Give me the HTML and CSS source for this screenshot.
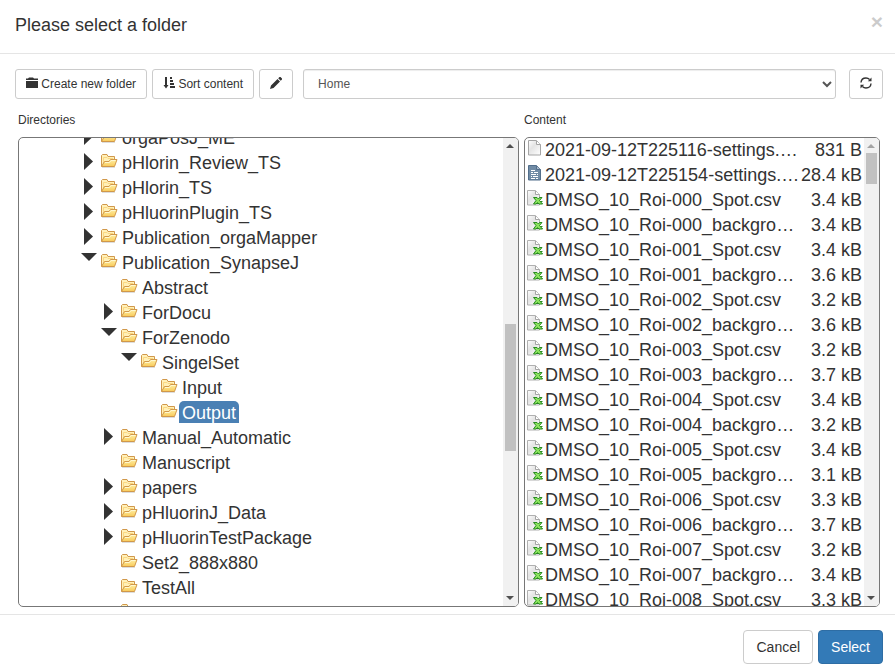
FILE: index.html
```html
<!DOCTYPE html>
<html lang="en">
<head>
<meta charset="utf-8">
<title>Please select a folder</title>
<link rel="stylesheet" href="styles.css">
</head>
<body>
<svg class="sprites" aria-hidden="true">
  <defs>
    <linearGradient id="gold" x1="0" y1="0" x2="0" y2="1"><stop offset="0" stop-color="#fff0a8"/><stop offset="1" stop-color="#f8ca58"/></linearGradient>
    <linearGradient id="paper" x1="0" y1="0" x2="1" y2="1"><stop offset="0" stop-color="#ffffff"/><stop offset="0.4" stop-color="#e4e4e4"/><stop offset="1" stop-color="#ffffff"/></linearGradient>
  </defs>
  <symbol id="folder" viewBox="0 0 17 16">
    <path d="M1 14.5h13" stroke="#ddd"/>
    <path d="M.5 13.5v-11l1-1H6l1 2h6.500v3" fill="#fff0b8" stroke="#d1984a"/>
    <path d="M2.500 11V4.500H6l1 1h5" fill="none" stroke="#fbd780"/>
    <path d="M.5 13.500l3-5H8l1.500-2h6.500l-2.500 7z" fill="url(#gold)" stroke="#d1984a"/>
    <path d="M4 9.500h4.500l1.500-2h4.500" fill="none" stroke="#fff8d0"/>
  </symbol>
  <symbol id="right" viewBox="0 0 20 25"><path d="M4 3v17l9-8.500z" fill="#333"/></symbol>
  <symbol id="down" viewBox="0 0 20 25"><path d="M1 3h16l-8 8z" fill="#333"/></symbol>
  <symbol id="blank" viewBox="0 0 16 16">
    <path d="M1.500.5h8l4 4v10.500h-12z" fill="url(#paper)" stroke="#a5a5a5"/>
    <path d="M9.500 1v3.500h4" fill="#fff" stroke="#a5a5a5"/>
  </symbol>
  <symbol id="text" viewBox="0 0 16 16">
    <path d="M1.500.5h8l4 4v10.500h-12z" fill="#708ba5" stroke="#526e8b"/>
    <path d="M9.500 1v3.500h4" fill="#a9bacb" stroke="#526e8b"/>
    <path d="M4 5.500h4M4 7.500h2m1 0h4M4 9.500h5m1 0h1M4 11.500h1m1 0h5M4 13.500h4m1 0h2" stroke="#fff"/>
  </symbol>
  <symbol id="sheet" viewBox="0 0 16 16">
    <path d="M.5.5h8l4 4v10.500H.5z" fill="url(#paper)" stroke="#b0b0b0"/>
    <path d="M8.500 1v3.500h4" fill="#fff" stroke="#a5a5a5"/>
    <path d="M10 13.500h5.500M12 11.500h3.500" stroke="#278a20"/>
    <path d="M6.500 7.500H10l1.500 1.500 1-1.500h2.500l-2.500 3 3 3.500H12l-1.500-1.500-1.500 1.500H6.500L9 10.500z" fill="#8be45c" stroke="#278a20"/>
  </symbol>
</svg>

<main class="dialog">
  <header class="header">
    <h1>Please select a folder</h1>
    <button class="close" type="button" aria-label="Close">×</button>
  </header>

  <div class="toolbar">
    <button class="btn small" type="button"><svg class="glyph" viewBox="0 0 12 12"><path d="M0 1.500h2l1-1h4l1 1h4v1.500H0zM0 4h12v7H0z"/></svg> Create new folder</button>
    <button class="btn small" type="button"><svg class="glyph" viewBox="0 0 12 12"><path d="M2 0h2v8h1.500L3 11.500.5 8H2zM7 0h2v2H7zM7 3h3v2H7zM7 6h4v2H7zM7 9h5v2H7z"/></svg> Sort content</button>
    <button class="btn small" type="button" aria-label="Rename"><svg class="glyph" viewBox="0 0 12 12"><path d="M0 12l1-3.500L7.500 2 10 4.500 3.500 11zM8.200 1.300L9.500 0h1L12 1.500v1l-1.300 1.300z"/></svg></button>
    <select class="places" aria-label="Location"><option>Home</option></select>
    <button class="btn small" type="button" aria-label="Refresh"><svg class="glyph" viewBox="0 0 12 12"><path d="M1 5.500C1.200 2.800 3.300 1 6 1c1.600 0 2.700.6 3.600 1.500M11 6.500C10.800 9.200 8.700 11 6 11c-1.600 0-2.700-.6-3.600-1.500" fill="none" stroke="#333" stroke-width="1.400"/><path d="M11.500.5v3.700H7.800zM.5 11.500V7.800h3.700z"/></svg></button>
  </div>

  <div class="panes">
    <section class="pane">
      <h2>Directories</h2>
      <div class="frame">
        <div class="view">
          <ul class="tree">
            <li><div class="node"><svg class="toggle"><use href="#right"/></svg><svg class="folder"><use href="#folder"/></svg><span>orgaPosJ_ME</span></div></li>
            <li><div class="node"><svg class="toggle"><use href="#right"/></svg><svg class="folder"><use href="#folder"/></svg><span>pHlorin_Review_TS</span></div></li>
            <li><div class="node"><svg class="toggle"><use href="#right"/></svg><svg class="folder"><use href="#folder"/></svg><span>pHlorin_TS</span></div></li>
            <li><div class="node"><svg class="toggle"><use href="#right"/></svg><svg class="folder"><use href="#folder"/></svg><span>pHluorinPlugin_TS</span></div></li>
            <li><div class="node"><svg class="toggle"><use href="#right"/></svg><svg class="folder"><use href="#folder"/></svg><span>Publication_orgaMapper</span></div></li>
            <li><div class="node"><svg class="toggle"><use href="#down"/></svg><svg class="folder"><use href="#folder"/></svg><span>Publication_SynapseJ</span></div>
              <ul>
                <li><div class="node"><svg class="toggle"></svg><svg class="folder"><use href="#folder"/></svg><span>Abstract</span></div></li>
                <li><div class="node"><svg class="toggle"><use href="#right"/></svg><svg class="folder"><use href="#folder"/></svg><span>ForDocu</span></div></li>
                <li><div class="node"><svg class="toggle"><use href="#down"/></svg><svg class="folder"><use href="#folder"/></svg><span>ForZenodo</span></div>
                  <ul>
                    <li><div class="node"><svg class="toggle"><use href="#down"/></svg><svg class="folder"><use href="#folder"/></svg><span>SingelSet</span></div>
                      <ul>
                        <li><div class="node"><svg class="toggle"></svg><svg class="folder"><use href="#folder"/></svg><span>Input</span></div></li>
                        <li><div class="node"><svg class="toggle"></svg><svg class="folder"><use href="#folder"/></svg><span class="selected">Output</span></div></li>
                      </ul>
                    </li>
                  </ul>
                </li>
                <li><div class="node"><svg class="toggle"><use href="#right"/></svg><svg class="folder"><use href="#folder"/></svg><span>Manual_Automatic</span></div></li>
                <li><div class="node"><svg class="toggle"></svg><svg class="folder"><use href="#folder"/></svg><span>Manuscript</span></div></li>
                <li><div class="node"><svg class="toggle"><use href="#right"/></svg><svg class="folder"><use href="#folder"/></svg><span>papers</span></div></li>
                <li><div class="node"><svg class="toggle"><use href="#right"/></svg><svg class="folder"><use href="#folder"/></svg><span>pHluorinJ_Data</span></div></li>
                <li><div class="node"><svg class="toggle"><use href="#right"/></svg><svg class="folder"><use href="#folder"/></svg><span>pHluorinTestPackage</span></div></li>
                <li><div class="node"><svg class="toggle"></svg><svg class="folder"><use href="#folder"/></svg><span>Set2_888x880</span></div></li>
                <li><div class="node"><svg class="toggle"></svg><svg class="folder"><use href="#folder"/></svg><span>TestAll</span></div></li>
                <li><div class="node"><svg class="toggle"></svg><svg class="folder"><use href="#folder"/></svg></div></li>
              </ul>
            </li>
          </ul>
        </div>
        <div class="bar">
          <svg class="arrow" viewBox="0 0 15 15"><path d="M3 10h8L7 6z"/></svg>
          <div class="track middle"><div class="thumb"></div></div>
          <svg class="arrow" viewBox="0 0 15 15"><path d="M3 5h8L7 9z"/></svg>
        </div>
      </div>
    </section>

    <section class="pane">
      <h2>Content</h2>
      <div class="frame">
        <div class="view">
          <table class="files">
            <colgroup><col class="kind"><col><col class="size"></colgroup>
            <tbody>
              <tr><td><svg class="file"><use href="#blank"/></svg></td><td>2021-09-12T225116-settings.json</td><td>831 B</td></tr>
              <tr><td><svg class="file"><use href="#text"/></svg></td><td>2021-09-12T225154-settings.json</td><td>28.4 kB</td></tr>
              <tr><td><svg class="file"><use href="#sheet"/></svg></td><td>DMSO_10_Roi-000_Spot.csv</td><td>3.4 kB</td></tr>
              <tr><td><svg class="file"><use href="#sheet"/></svg></td><td>DMSO_10_Roi-000_background.csv</td><td>3.4 kB</td></tr>
              <tr><td><svg class="file"><use href="#sheet"/></svg></td><td>DMSO_10_Roi-001_Spot.csv</td><td>3.4 kB</td></tr>
              <tr><td><svg class="file"><use href="#sheet"/></svg></td><td>DMSO_10_Roi-001_background.csv</td><td>3.6 kB</td></tr>
              <tr><td><svg class="file"><use href="#sheet"/></svg></td><td>DMSO_10_Roi-002_Spot.csv</td><td>3.2 kB</td></tr>
              <tr><td><svg class="file"><use href="#sheet"/></svg></td><td>DMSO_10_Roi-002_background.csv</td><td>3.6 kB</td></tr>
              <tr><td><svg class="file"><use href="#sheet"/></svg></td><td>DMSO_10_Roi-003_Spot.csv</td><td>3.2 kB</td></tr>
              <tr><td><svg class="file"><use href="#sheet"/></svg></td><td>DMSO_10_Roi-003_background.csv</td><td>3.7 kB</td></tr>
              <tr><td><svg class="file"><use href="#sheet"/></svg></td><td>DMSO_10_Roi-004_Spot.csv</td><td>3.4 kB</td></tr>
              <tr><td><svg class="file"><use href="#sheet"/></svg></td><td>DMSO_10_Roi-004_background.csv</td><td>3.2 kB</td></tr>
              <tr><td><svg class="file"><use href="#sheet"/></svg></td><td>DMSO_10_Roi-005_Spot.csv</td><td>3.4 kB</td></tr>
              <tr><td><svg class="file"><use href="#sheet"/></svg></td><td>DMSO_10_Roi-005_background.csv</td><td>3.1 kB</td></tr>
              <tr><td><svg class="file"><use href="#sheet"/></svg></td><td>DMSO_10_Roi-006_Spot.csv</td><td>3.3 kB</td></tr>
              <tr><td><svg class="file"><use href="#sheet"/></svg></td><td>DMSO_10_Roi-006_background.csv</td><td>3.7 kB</td></tr>
              <tr><td><svg class="file"><use href="#sheet"/></svg></td><td>DMSO_10_Roi-007_Spot.csv</td><td>3.2 kB</td></tr>
              <tr><td><svg class="file"><use href="#sheet"/></svg></td><td>DMSO_10_Roi-007_background.csv</td><td>3.4 kB</td></tr>
              <tr><td><svg class="file"><use href="#sheet"/></svg></td><td>DMSO_10_Roi-008_Spot.csv</td><td>3.3 kB</td></tr>
            </tbody>
          </table>
        </div>
        <div class="bar">
          <svg class="arrow dim" viewBox="0 0 15 15"><path d="M3 10h8L7 6z"/></svg>
          <div class="track top"><div class="thumb"></div></div>
          <svg class="arrow" viewBox="0 0 15 15"><path d="M3 5h8L7 9z"/></svg>
        </div>
      </div>
    </section>
  </div>

  <footer class="footer">
    <button class="btn" type="button">Cancel</button>
    <button class="btn primary" type="button">Select</button>
  </footer>
</main>
</body>
</html>
```
FILE: styles.css
```css
* { box-sizing: border-box; }

body {
  margin: 0;
  background: #fff;
  color: #333;
  font: 14px/20px "Liberation Sans", Arial, sans-serif;
}

.sprites { position: absolute; width: 0; height: 0; }

.dialog {
  display: flex;
  flex-direction: column;
  height: 100vh;
}

.header {
  display: flex;
  align-items: flex-start;
  justify-content: space-between;
  padding: 12px 12px 15px 15px;
  border-bottom: 1px solid #e5e5e5;
}

h1 {
  margin: 0;
  font-size: 18px;
  font-weight: 400;
  line-height: 26px;
}

.close {
  padding: 0;
  border: 0;
  background: none;
  color: #000;
  opacity: 0.2;
  font: bold 21px/20px "Liberation Sans", Arial, sans-serif;
}

.toolbar {
  display: flex;
  gap: 5px;
  padding: 15px 12px 0 15px;
}

.btn {
  padding: 6px 12px;
  border: 1px solid #ccc;
  border-radius: 4px;
  background: #fff;
  color: #333;
  font: inherit;
  white-space: nowrap;
}

.btn.small {
  height: 30px;
  padding: 5px 10px;
  border-radius: 3px;
  font-size: 12px;
  line-height: 18px;
}

.btn.primary {
  border-color: #2e6da4;
  background: #337ab7;
  color: #fff;
}

.glyph {
  width: 12px;
  height: 12px;
  vertical-align: -1px;
  fill: #333;
}

.places {
  flex: 1;
  min-width: 0;
  height: 30px;
  margin: 0 8px 0 5px;
  padding: 5px 0 5px 10px;
  border: 1px solid #ccc;
  border-radius: 3px;
  background: #fff;
  box-shadow: inset 0 1px 1px rgba(0, 0, 0, 0.075);
  color: #555;
  font: inherit;
  font-size: 12px;
}

.panes {
  display: grid;
  grid-template-columns: minmax(0, 38fr) minmax(0, 27fr);
  gap: 5px;
  flex: 1;
  min-height: 0;
  padding: 11px 15px 7px 18px;
}

.pane {
  display: flex;
  flex-direction: column;
  min-height: 0;
}

h2 {
  margin: 0 0 7px;
  font-size: 12px;
  font-weight: 400;
  line-height: 20px;
}

.frame {
  display: flex;
  flex: 1;
  min-height: 0;
  overflow: hidden;
  border: 1px solid #777;
  border-radius: 5px;
}

.view {
  flex: 1;
  min-width: 0;
  overflow: hidden;
  font-size: 18px;
  line-height: 25px;
}

.tree, .tree ul {
  margin: 0;
  padding: 0;
  list-style: none;
}

.tree {
  margin-top: -13px;
  padding-left: 61px;
}

.tree ul { padding-left: 20px; }

.node {
  display: flex;
  height: 25px;
}

.toggle { width: 20px; height: 25px; }

.folder { width: 17px; height: 16px; margin: 3px 1px 0; }

.node span {
  height: 22px;
  margin-top: 1px;
  padding: 0 3px;
  line-height: 24px;
  white-space: nowrap;
}

.node .selected {
  border-radius: 5px 5px 0 0;
  background: #4a80b4;
  color: #fff;
}

.files {
  width: 100%;
  table-layout: fixed;
  border-collapse: collapse;
}

.kind { width: 20px; }
.size { width: 64px; }

.files td {
  height: 25px;
  padding: 0;
  overflow: hidden;
  text-overflow: ellipsis;
  white-space: nowrap;
}

.files td:first-child { padding: 2px 0 0 2px; vertical-align: top; }
.files td:last-child { padding-right: 2px; text-align: right; }

.file { display: block; width: 16px; height: 16px; }

.bar {
  display: flex;
  flex-direction: column;
  flex: 0 0 15px;
  background: #f1f1f1;
}

.arrow { width: 15px; height: 15px; fill: #505050; }
.arrow.dim { fill: #a3a3a3; }

.track {
  display: grid;
  flex: 1;
  padding: 0 2px;
}

.track.middle { grid-template-rows: 39fr 29fr 32fr; }
.track.top { grid-template-rows: 0 7fr 93fr; }

.thumb { grid-row: 2; background: #c1c1c1; }

.footer {
  display: flex;
  justify-content: flex-end;
  gap: 5px;
  padding: 15px 12px 3px;
  border-top: 1px solid #e5e5e5;
}
```
